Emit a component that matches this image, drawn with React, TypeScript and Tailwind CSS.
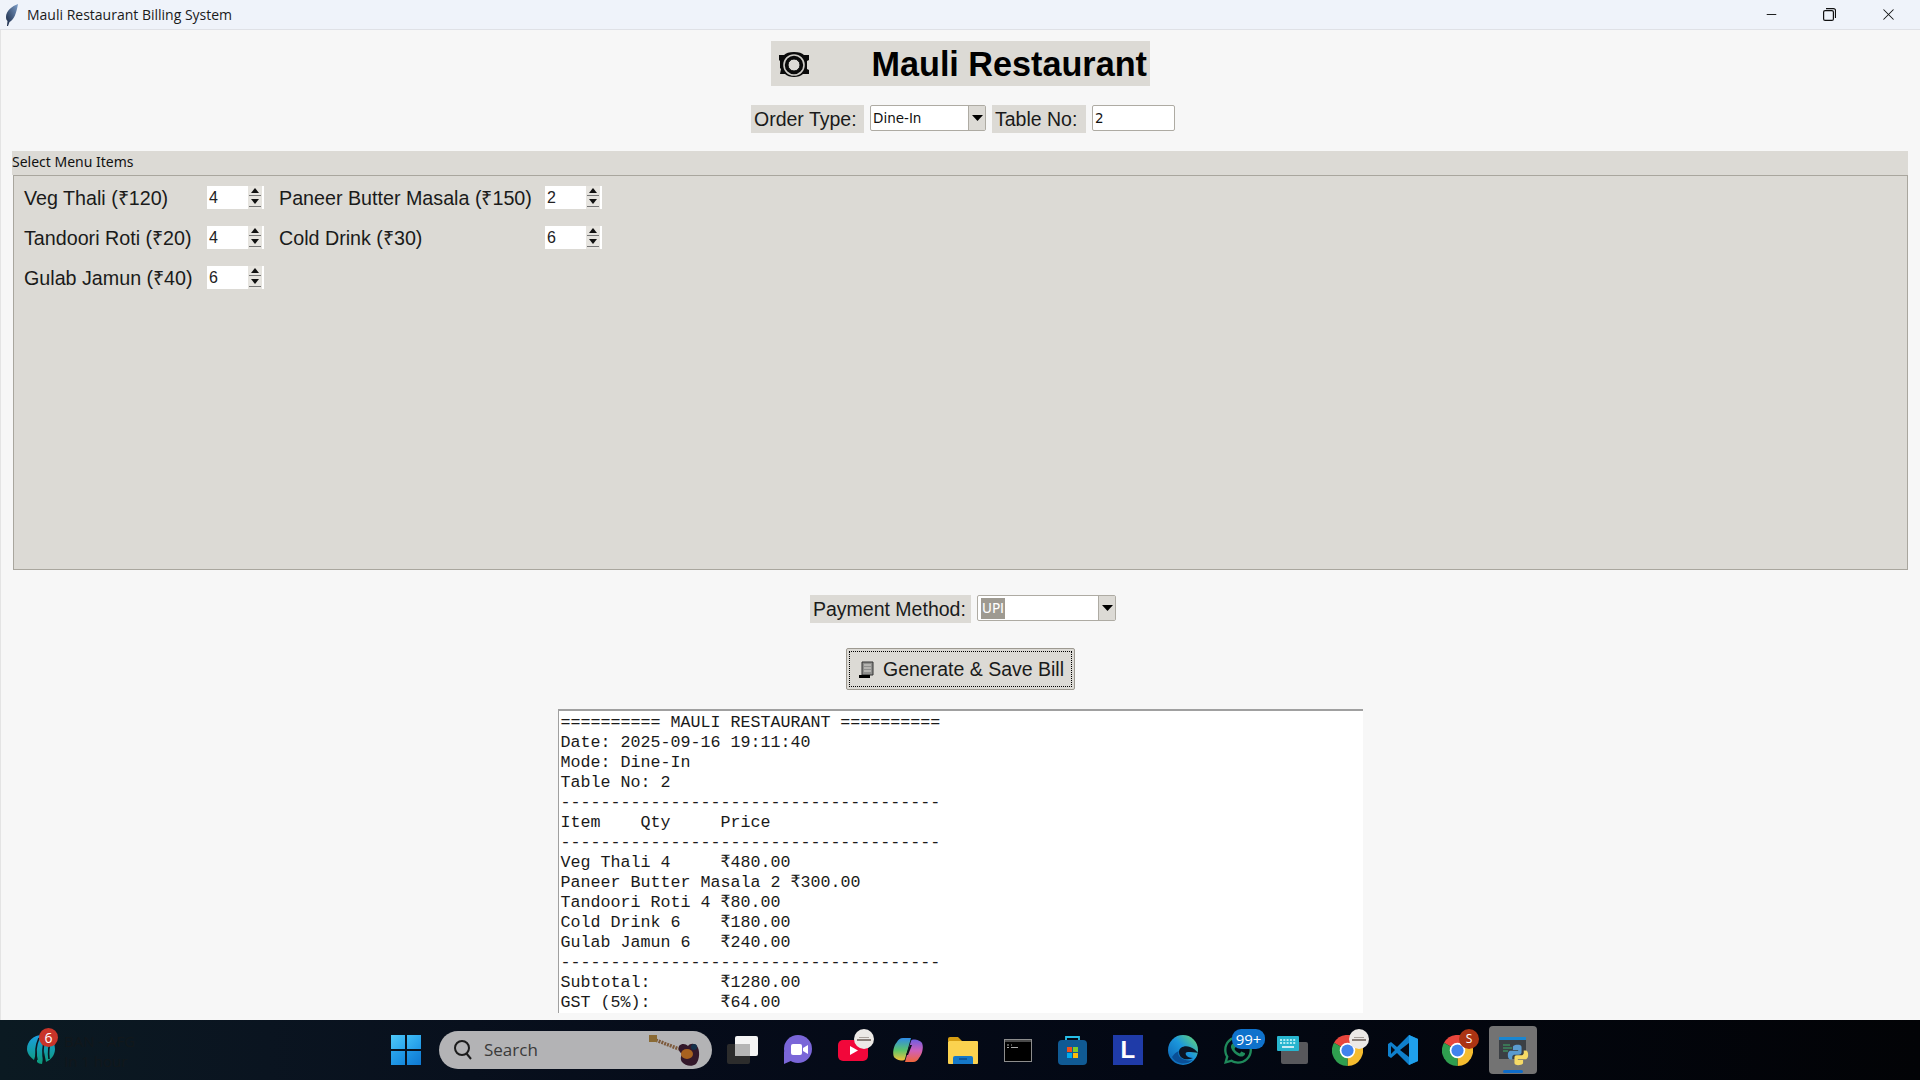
import { Minus, X } from "lucide-react";
import { FaWhatsapp } from "react-icons/fa";
import type { ReactNode } from "react";

const chipFont = "font-['Liberation_Sans',Arial,sans-serif]";
const uiFont = "font-['DejaVu_Sans',sans-serif]";

const menuRows = [
  ["Veg Thali (₹120)", "4", "Paneer Butter Masala (₹150)", "2"],
  ["Tandoori Roti (₹20)", "4", "Cold Drink (₹30)", "6"],
  ["Gulab Jamun (₹40)", "6"],
];

const billLines = [
  "========== MAULI RESTAURANT ==========",
  "Date: 2025-09-16 19:11:40",
  "Mode: Dine-In",
  "Table No: 2",
  "--------------------------------------",
  "Item    Qty     Price",
  "--------------------------------------",
  "Veg Thali 4     ₹480.00",
  "Paneer Butter Masala 2 ₹300.00",
  "Tandoori Roti 4 ₹80.00",
  "Cold Drink 6    ₹180.00",
  "Gulab Jamun 6   ₹240.00",
  "--------------------------------------",
  "Subtotal:       ₹1280.00",
  "GST (5%):       ₹64.00",
];

function Spinbox({ value }: { value: string }) {
  return (
    <div className="flex h-[23px] w-[57px] bg-white">
      <span className={`${chipFont} flex-1 pl-[2px] text-[16px] leading-[23px] text-[#222]`}>{value}</span>
      <svg width="14" height="23" viewBox="0 0 14 23" className="mr-[2px] bg-[#e6e4df]">
        <path d="M7 2l4 5H3z" fill="#111" />
        <path d="M1 9.500h12" stroke="#777" />
        <path d="M3 13h8l-4 5z" fill="#111" />
        <path d="M1 20.500h12" stroke="#777" />
      </svg>
    </div>
  );
}

function Combo({ width, children }: { width: string; children: ReactNode }) {
  return (
    <div className={`flex h-[26px] ${width} rounded-[2px] border border-[#aeaba3] bg-white`}>
      <div className={`${uiFont} flex flex-1 items-center pl-[2px] pt-[1px] text-[13.500px] text-[#111]`}>{children}</div>
      <div className="flex w-[17px] items-center justify-center border-l border-[#aeaba3] bg-[#dcdad5]">
        <svg width="11" height="6" viewBox="0 0 11 6">
          <path d="M0 0h11L5.500 6z" fill="#000" />
        </svg>
      </div>
    </div>
  );
}

function PlateIcon() {
  return (
    <svg width="30" height="26" viewBox="0 0 30 26" className="mt-[3px]">
      <path d="M0 3h5c2-2 5-3 10-3s8 1 10 3h5v5l-2 1v8l2 1v4h-6c-2 2-5 3-9 3s-7-1-9-3H1l1-5-1-1V9L0 8z" fill="#0a0a0a" />
      <circle cx="15" cy="13" r="10" fill="none" stroke="#cfcdc8" strokeWidth="1.600" />
      <circle cx="15" cy="13" r="6" fill="#dcdad5" stroke="#0a0a0a" strokeWidth="1" />
    </svg>
  );
}

function ReceiptIcon() {
  return (
    <svg width="15" height="18" viewBox="0 0 15 18">
      <path d="M3 1h11v13H3z" fill="#8f8f8d" stroke="#333" />
      <path d="M5 4h7M5 7h7M5 10h7" stroke="#dcdad5" strokeWidth="1.200" />
      <path d="M0 14h11v3H0z" fill="#000" />
    </svg>
  );
}

function FeatherIcon() {
  return (
    <svg width="14" height="22" viewBox="0 0 14 22">
      <defs>
        <linearGradient id="feather" x1="0" y1="1" x2="1" y2="0">
          <stop offset="0" stopColor="#14233f" />
          <stop offset="1" stopColor="#7e9fca" />
        </linearGradient>
      </defs>
      <path d="M13 0C7 2 1 7 1 13c0 2 .5 3 1.500 4L2 22h1l1.500-4c4.500-2 7-9 8.500-18z" fill="url(#feather)" />
    </svg>
  );
}

function Badge({ className, children }: { className: string; children: ReactNode }) {
  return (
    <span className={`absolute flex items-center justify-center font-['Open_Sans',sans-serif] text-white ${className}`}>
      {children}
    </span>
  );
}

function AdBadge() {
  return (
    <span className="absolute right-[6px] top-[9px] flex h-[20px] w-[20px] flex-col items-center justify-center gap-[1px] rounded-full bg-[#ece9e6]">
      <span className="h-[1px] w-[10px] bg-[#a8a09a]" />
      <span className="h-[2px] w-[14px] bg-[#8a7f78]" />
    </span>
  );
}

function ChromeLogo() {
  return (
    <svg width="31" height="31" viewBox="0 0 32 32">
      <path d="M16 16L2.100 8A16 16 0 0 1 29.900 8z" fill="#e8453c" />
      <path d="M16 16L29.900 8A16 16 0 0 1 16 32z" fill="#f5bc2f" />
      <path d="M16 16L16 32A16 16 0 0 1 2.100 8z" fill="#2f9e4f" />
      <circle cx="16" cy="16" r="8" fill="#fff" />
      <circle cx="16" cy="16" r="6.300" fill="#3f83ee" />
    </svg>
  );
}

function TaskIcon({ children, active }: { children: ReactNode; active?: boolean }) {
  return (
    <div className="relative flex h-[60px] w-[55px] items-center justify-center">
      {active && <span className="absolute left-[4px] top-[6px] h-[48px] w-[48px] rounded-[4px] bg-[#737373]" />}
      {children}
      {active && <span className="absolute bottom-[7px] left-[18px] h-[3px] w-[20px] rounded-full bg-[#0f6cc8]" />}
    </div>
  );
}

function PythonLogo() {
  return (
    <svg width="22" height="22" viewBox="3 3 26 26" className="absolute left-[22px] top-[24px]">
      <path d="M16 4c-6 0-6 2.600-6 2.600V10h6.200v1H7.500S4 10.600 4 16s3 5.200 3 5.200h2.200v-2.600s-.1-3 3-3h5.200s2.800 0 2.800-2.800V7s.4-3-4.200-3z" fill="#5b9bd0" />
      <path d="M16 28c6 0 6-2.600 6-2.600V22h-6.200v-1h8.700s3.500.4 3.500-5-3-5.200-3-5.200h-2.200v2.600s.1 3-3 3h-5.200s-2.800 0-2.800 2.800V25s-.4 3 4.200 3z" fill="#f6da66" />
    </svg>
  );
}

function Taskbar() {
  return (
    <footer className="flex h-[60px] shrink-0 items-center bg-[linear-gradient(90deg,#0b1a22_0%,#0a1420_14%,#060c1a_35%,#030814_60%,#020306_100%)]">
      {/* Widget */}
      <div className="relative flex h-full w-[378px] shrink-0 items-center">
        <svg width="28" height="29" viewBox="0 0 28 29" className="absolute left-[27px] top-[15px]">
          <defs>
            <linearGradient id="icc" x1="0" y1="0" x2="0" y2="1">
              <stop offset="0" stopColor="#1c9fe0" />
              <stop offset="1" stopColor="#0c9a78" />
            </linearGradient>
          </defs>
          <path d="M15 0a14 14 0 0 1 13 14c0 6-4 11-9 13L17 17 15 29c-2 0-4-1-5-2V15L7 25C3 22 0 18 0 14 0 6 7 0 15 0z" fill="url(#icc)" />
          <path d="M12 3c-3 7-4 15-2 22M18 3c-2 7-3 15-1 24M24 4c-2 6-3 13-2 20" stroke="#0b1620" strokeWidth="1.600" fill="none" />
        </svg>
        <Badge className="left-[39px] top-[8px] h-[19px] w-[19px] rounded-full bg-[#c8342a] text-[14px]">6</Badge>
        <div className="absolute left-[64px] top-[11px] font-['Open_Sans',sans-serif] text-[15px] leading-[20px] text-[#11171b]">
          <div>BAN - AFG</div>
          <div>In 1 hour</div>
        </div>
      </div>

      <TaskIcon>
        <div className="grid grid-cols-[14px_14px] gap-[2px]">
          <span className="h-[14px] bg-[linear-gradient(135deg,#4fc8f8,#2aa6ee)]" />
          <span className="h-[14px] bg-[linear-gradient(135deg,#3fbcf5,#1f97e6)]" />
          <span className="h-[14px] bg-[linear-gradient(135deg,#2aa6ee,#1588dc)]" />
          <span className="h-[14px] bg-[linear-gradient(135deg,#1f97e6,#0f78d0)]" />
        </div>
      </TaskIcon>

      {/* Search */}
      <div className="relative ml-[6px] mr-[3px] flex h-[38px] w-[273px] shrink-0 items-center rounded-full bg-[#b3b3b5] pl-[14px]">
        <svg width="20" height="22" viewBox="0 0 20 22">
          <circle cx="9" cy="9" r="7" fill="none" stroke="#1c1c1c" strokeWidth="2" />
          <path d="M13.500 14.500L18 20" stroke="#1c1c1c" strokeWidth="2" />
        </svg>
        <span className="ml-[11px] font-['Open_Sans',sans-serif] text-[17px] text-[#3a3a3a]">Search</span>
        <svg width="54" height="34" viewBox="0 0 54 34" className="absolute right-[9px] top-[3px]">
          <path d="M4 5l26 10" stroke="#7d5a3c" strokeWidth="3.500" strokeDasharray="2 1" />
          <rect x="0" y="1" width="8" height="7" fill="#8a6a34" />
          <path d="M30 12c3-3 7-2 9 0 2-3 7-3 9 0 3 4 3 13-1 18-4 3-11 2-14-2-2-3-1-6 0-8-3-2-4-5-3-8z" fill="#33182a" />
          <ellipse cx="38" cy="20" rx="6" ry="5" fill="#a8621f" />
          <circle cx="45" cy="13" r="3" fill="#14304a" />
        </svg>
      </div>

      <TaskIcon>
        <svg width="32" height="28" viewBox="0 0 32 28">
          <rect x="0" y="8" width="23" height="20" rx="2" fill="#2c2c2c" />
          <rect x="8" y="0" width="23" height="20" rx="2" fill="#f4f4f4" />
          <rect x="8" y="8" width="15" height="12" fill="#b5b5b5" />
        </svg>
      </TaskIcon>
      <TaskIcon>
        <svg width="30" height="30" viewBox="0 0 30 30" className="-ml-[2px]">
          <circle cx="16" cy="14" r="14" fill="#7a66d8" />
          <path d="M2 16v13l9-4z" fill="#7a66d8" />
          <rect x="9" y="9" width="11" height="11" rx="2" fill="#fff" />
          <path d="M21 13l5-3v9l-5-3z" fill="#fff" />
        </svg>
      </TaskIcon>
      <TaskIcon>
        <svg width="30" height="21" viewBox="0 0 30 21">
          <rect width="30" height="21" rx="5" fill="#f2073a" />
          <path d="M12 6l8 4.500-8 4.500z" fill="#fff" />
        </svg>
        <AdBadge />
      </TaskIcon>
      <TaskIcon>
        <svg width="30" height="28" viewBox="0 0 30 28">
          <defs>
            <linearGradient id="copilotA" x1="0" y1="0" x2="0" y2="1">
              <stop offset="0" stopColor="#2f8be8" />
              <stop offset="0.550" stopColor="#5cc46a" />
              <stop offset="1" stopColor="#f4c23a" />
            </linearGradient>
            <linearGradient id="copilotB" x1="0" y1="0" x2="0" y2="1">
              <stop offset="0" stopColor="#6f5ee0" />
              <stop offset="0.500" stopColor="#d060b8" />
              <stop offset="1" stopColor="#f0663a" />
            </linearGradient>
          </defs>
          <path d="M10 2h8l-6 21c-1 3-9 1-11-2C-1 17 1 9 4 6c1-2 3-4 6-4z" fill="url(#copilotA)" />
          <path d="M20 26h-8l6-21c1-3 9-1 11 2 2 4 0 12-3 15-1 2-3 4-6 4z" fill="url(#copilotB)" />
          <path d="M17 9l-4 10h2l4-10z" fill="#0a0e18" />
        </svg>
      </TaskIcon>
      <TaskIcon>
        <svg width="30" height="27" viewBox="0 0 30 27">
          <path d="M0 2a2 2 0 0 1 2-2h8l4 4H0z" fill="#d69d12" />
          <rect y="4" width="30" height="23" rx="1" fill="#fbd24f" />
          <path d="M5 21a2 2 0 0 1 2-2h16a2 2 0 0 1 2 2v6H5z" fill="#1578c8" />
          <path d="M11 22h8" stroke="#0b4d8e" strokeWidth="1.500" />
        </svg>
      </TaskIcon>
      <TaskIcon>
        <svg width="28" height="23" viewBox="0 0 28 23">
          <rect x="0.500" y="0.500" width="27" height="22" fill="#000" stroke="#8d8d8d" />
          <rect x="1" y="1" width="26" height="2" fill="#4a4a4a" />
          <path d="M3 6h2M3 8.500h2M7 6h1M7 8.500h7" stroke="#aaa" />
        </svg>
      </TaskIcon>
      <TaskIcon>
        <svg width="29" height="30" viewBox="0 0 29 30">
          <path d="M8 6V2h13v4" fill="none" stroke="#27bfe8" strokeWidth="1.800" />
          <rect y="5" width="29" height="25" rx="4" fill="#105a94" />
          <rect x="9" y="12" width="5" height="5" fill="#f1511b" />
          <rect x="15" y="12" width="5" height="5" fill="#80cc28" />
          <rect x="9" y="18" width="5" height="5" fill="#00adef" />
          <rect x="15" y="18" width="5" height="5" fill="#fbbc09" />
        </svg>
      </TaskIcon>
      <TaskIcon>
        <div className="relative h-[30px] w-[30px] bg-[#1f3ba8]">
          <span className="absolute left-[8px] top-[1px] font-['Liberation_Sans',sans-serif] text-[24px] font-bold leading-[28px] text-white">L</span>
        </div>
      </TaskIcon>
      <TaskIcon>
        <svg width="30" height="30" viewBox="0 0 30 30">
          <defs>
            <linearGradient id="edge" x1="0" y1="1" x2="1" y2="0">
              <stop offset="0" stopColor="#0b5fb0" />
              <stop offset="0.550" stopColor="#1b97dc" />
              <stop offset="1" stopColor="#6fdc6a" />
            </linearGradient>
          </defs>
          <circle cx="15" cy="15" r="15" fill="url(#edge)" />
          <path d="M4 22c4 7 14 9 21 3-5 1-10 0-13-3-2-2-2-4-1-6-3 1-5 3-7 6z" fill="#0a4f96" />
          <path d="M11 17c0-5 6-7 11-5 3 1 6 3 8 6-3-1-7-1-10-1-2 0-3 1-2 3 1 2 4 3 7 3-6 3-14 1-14-6z" fill="#0b1424" />
        </svg>
      </TaskIcon>
      <TaskIcon>
        <FaWhatsapp className="h-[32px] w-[32px] text-[#1f8a5b]" />
        <Badge className="left-[22px] top-[9px] h-[20px] w-[33px] rounded-[9px] bg-[#0f72cc] text-[15px] leading-none">99+</Badge>
      </TaskIcon>
      <TaskIcon>
        <svg width="31" height="28" viewBox="0 0 31 28">
          <rect x="4" y="6" width="27" height="22" rx="2" fill="#58585c" />
          <rect y="0" width="22" height="15" rx="1" fill="#27b5cf" />
          <path d="M3 4h16M3 7h16" stroke="#dff" strokeWidth="1.500" strokeDasharray="2 1.300" />
          <path d="M5 11h12" stroke="#fff" strokeWidth="1.500" />
        </svg>
      </TaskIcon>
      <TaskIcon>
        <ChromeLogo />
        <AdBadge />
      </TaskIcon>
      <TaskIcon>
        <svg width="30" height="30" viewBox="0 0 30 30">
          <path d="M21 0l9 4v22l-9 4L9 18l-6 5-3-2v-12l3-2 6 5z" fill="#0f80cc" />
          <path d="M21 0l9 4v22l-9 4z" fill="#1fa0ec" />
          <path d="M21 8v14l-9-7z" fill="#050a14" />
          <path d="M3 11l4 4-4 4z" fill="#050a14" />
        </svg>
      </TaskIcon>
      <TaskIcon>
        <ChromeLogo />
        <Badge className="right-[6px] top-[9px] h-[20px] w-[20px] rounded-full bg-[#ab3413] text-[12px] text-[#f0c8b8]">S</Badge>
      </TaskIcon>
      <TaskIcon active>
        <svg width="27" height="22" viewBox="0 0 27 22" className="absolute left-[14px] top-[17px]">
          <rect width="27" height="22" fill="#3b3f44" />
          <rect width="27" height="3" fill="#1a86d0" />
          <path d="M4 8h7M4 11h9M4 14h5" stroke="#3fae6a" />
        </svg>
        <PythonLogo />
      </TaskIcon>
    </footer>
  );
}

export default function App() {
  return (
    <div className="flex h-screen w-full flex-col overflow-hidden bg-[#f7f7f7]">
      {/* Title bar */}
      <header className="flex h-[30px] shrink-0 items-center justify-between border-b border-[#dfe1e6] bg-[#eff3fa]">
        <div className="flex items-center">
          <div className="ml-[5px] w-[22px]">
            <FeatherIcon />
          </div>
          <span className="font-['Open_Sans',sans-serif] text-[14px] text-[#1a1a1a]">Mauli Restaurant Billing System</span>
        </div>
        <div className="mr-[2px] flex items-center text-[#111]">
          <span className="flex w-[58px] justify-center">
            <Minus className="h-[15px] w-[15px]" strokeWidth={1.500} />
          </span>
          <span className="flex w-[58px] justify-center">
            <svg width="13" height="13" viewBox="0 0 13 13" fill="none" stroke="#111" strokeWidth="1.200">
              <rect x="0.600" y="2.600" width="9.800" height="9.800" rx="1.500" />
              <path d="M3 .6h7.500A2 2 0 0 1 12.500 2.600V10" />
            </svg>
          </span>
          <span className="flex w-[60px] justify-center">
            <X className="h-[19px] w-[19px]" strokeWidth={1.300} />
          </span>
        </div>
      </header>

      <main className="flex min-h-0 flex-1 flex-col items-center overflow-hidden shadow-[inset_1px_0_0_#e4e4e4]">
        {/* Heading */}
        <div className="mt-[11px] flex h-[45px] w-[379px] shrink-0 items-center bg-[#dcdad5] pl-[8px]">
          <PlateIcon />
          <h1 className={`${chipFont} ml-[63px] whitespace-nowrap pt-[1px] text-[34.200px] font-bold leading-none text-black`}>Mauli Restaurant</h1>
        </div>

        {/* Order type */}
        <div className={`${chipFont} ml-[6px] mt-[19px] flex h-[28px] shrink-0 gap-[6px] text-[19.500px] text-[#1a1a1a]`}>
          <label className="flex w-[113px] items-center bg-[#dcdad5] pl-[3px] pt-[2px]">Order Type:</label>
          <Combo width="w-[116px]">Dine-In</Combo>
          <label className="flex w-[94px] items-center bg-[#dcdad5] pl-[3px] pt-[2px]">Table No:</label>
          <div className={`${uiFont} flex h-[26px] w-[83px] items-center rounded-[2px] border border-[#aeaba3] bg-white pl-[2px] pt-[1px] text-[13.500px] text-[#111]`}>2</div>
        </div>

        {/* Menu frame */}
        <section className="ml-[12px] mt-[18px] w-[1896px] shrink-0 self-start">
          <div className="h-[24px] bg-[#dcdad5] font-['Noto_Sans',sans-serif] text-[14px] leading-[22px] text-[#111]">Select Menu Items</div>
          <div className={`${chipFont} ml-[1px] h-[395px] border border-[#a9a69e] bg-[#dcdad5] pl-[10px] pt-[10px] text-[19.700px] text-[#1a1a1a]`}>
            <div className="grid grid-cols-[183px_72px_266px_57px] gap-y-[17px]">
              {menuRows.map((row) =>
                row.map((cell, i) =>
                  i % 2 === 0 ? (
                    <span key={cell} className="h-[23px] whitespace-nowrap leading-[25px]">{cell}</span>
                  ) : (
                    <Spinbox key={row[i - 1]} value={cell} />
                  ),
                ),
              )}
            </div>
          </div>
        </section>

        {/* Payment */}
        <div className={`${chipFont} ml-[6px] mt-[25px] flex h-[28px] shrink-0 gap-[6px] text-[19.500px] text-[#1a1a1a]`}>
          <label className="flex w-[161px] items-center bg-[#dcdad5] pl-[3px] pt-[2px]">Payment Method:</label>
          <Combo width="w-[139px]">
            <span className="ml-[1px] bg-[#9e9a91] px-[1px] text-white">UPI</span>
          </Combo>
        </div>

        {/* Generate button */}
        <button className={`${chipFont} mt-[25px] flex h-[42px] w-[229px] shrink-0 items-center justify-center gap-[9px] rounded-[2px] border border-[#9e9a91] bg-[#dcdad5] pl-[3px] pt-[2px] text-[19.500px] text-[#1a1a1a] outline-1 -outline-offset-4 outline-dotted outline-black`}>
          <ReceiptIcon />
          Generate &amp; Save Bill
        </button>

        {/* Bill text */}
        <pre className="mt-[19px] h-[304px] w-[805px] shrink-0 overflow-hidden border-l border-t-2 border-[#a0a0a0] bg-white pl-[2px] pt-[2px] font-['Liberation_Mono','DejaVu_Sans_Mono',monospace] text-[16.670px] leading-[20px] text-[#1a1a1a]">
          {billLines.join("\n")}
        </pre>
      </main>

      <Taskbar />
    </div>
  );
}
